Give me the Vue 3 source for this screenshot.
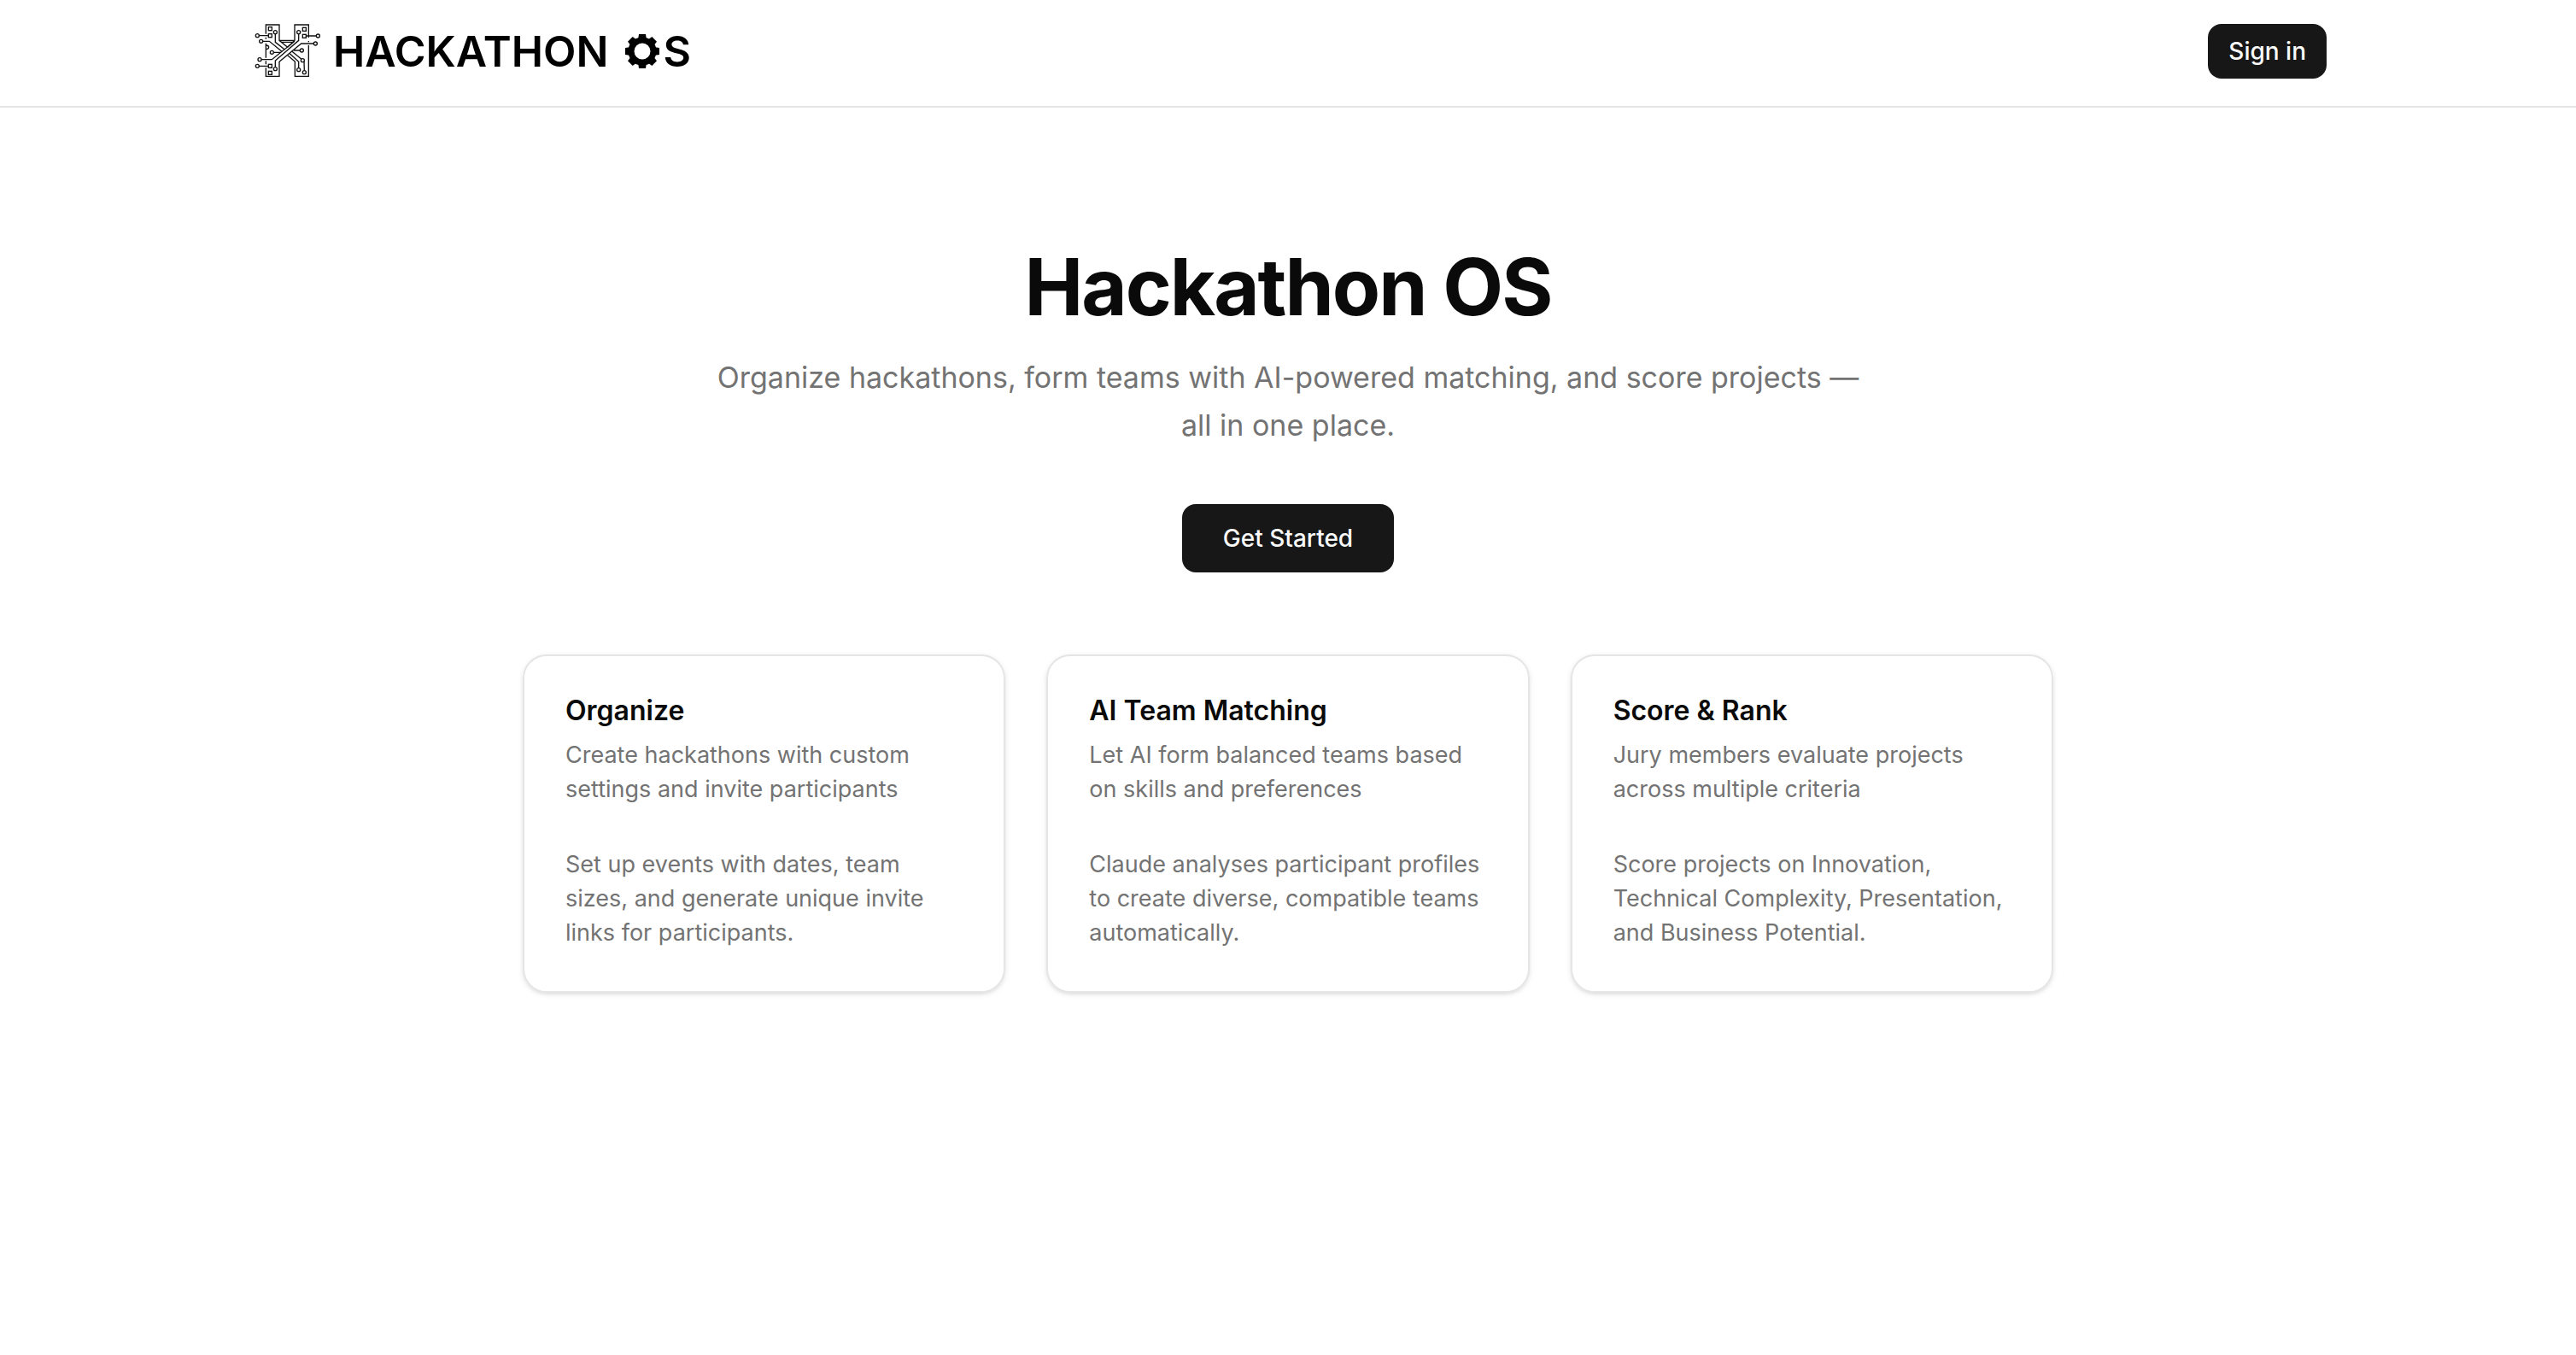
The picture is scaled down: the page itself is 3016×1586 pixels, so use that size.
<script setup>
    const features = [
        {
            title: 'Organize',
            description: 'Create hackathons with custom settings and invite participants',
            content: 'Set up events with dates, team sizes, and generate unique invite links for participants.'
        },
        {
            title: 'AI Team Matching',
            description: 'Let AI form balanced teams based on skills and preferences',
            content: 'Claude analyses participant profiles to create diverse, compatible teams automatically.'
        },
        {
            title: 'Score & Rank',
            description: 'Jury members evaluate projects across multiple criteria',
            content: 'Score projects on Innovation, Technical Complexity, Presentation, and Business Potential.'
        }
    ];

    // end points of the circuit traces in the logo
    const nodes = [
        [34, 65], [47, 85], [97, 53], [179, 53], [247, 66], [238, 93],
        [85, 124], [190, 117], [42, 149], [34, 172], [97, 182], [193, 152], [179, 185], [199, 194]
    ];
    const pads = [[73, 35], [73, 59], [193, 37], [193, 61], [73, 166], [73, 190]];
    const teeth = [0, 45, 90, 135, 180, 225, 270, 315];
</script>
<template>
    <div class="page">
        <header class="header">
            <div class="header-inner">
                <a class="logo" href="#" aria-label="Hackathon OS">
                    <svg class="logo-mark" viewBox="24 24 234 192" aria-hidden="true">
                        <g class="trace">
                            <path d="M64 59V27H111V82L140 106M140 106L165 82V27H214V72M214 84V88M214 99V208H166V156L140 134" />
                            <path d="M64 71V77M64 92V143M64 154V166M64 178V208H111V156" />
                            <path d="M111 82H165M118 88H158" />
                            <path d="M40 65H73M205 66H241M40 172H73" />
                            <path d="M53 85H76L120 121M97 59V88L130 114" />
                            <path d="M148 128L179 157V179M156 121L189 148M198 156L199 188" />
                            <path d="M91 124H116M184 117H162" />
                            <path d="M48 149H85L165 85" />
                            <path d="M179 59V82L97 153V176" />
                            <path d="M232 93H188L111 157" />
                            <path d="M64 99Q74 99 74 106Q74 113 64 113" />
                        </g>
                        <circle v-for="(n, i) in nodes" :key="i" class="node" :cx="n[0]" :cy="n[1]" r="6" />
                        <rect v-for="(p, i) in pads" :key="i" class="node" :x="p[0]" :y="p[1]" width="12" height="12" />
                    </svg>
                    <span class="logo-text">HACKATHON</span>
                    <svg class="logo-gear" viewBox="-20 -20 40 40" aria-hidden="true">
                        <path v-for="t in teeth" :key="t" d="M-5 -13L-4 -20H4L5 -13Z" :transform="`rotate(${t})`" />
                        <circle class="gear-ring" r="13" />
                    </svg>
                    <span class="logo-text">S</span>
                </a>
                <button class="btn btn-small" type="button">Sign in</button>
            </div>
        </header>
        <main class="main">
            <section class="hero">
                <h1>Hackathon OS</h1>
                <p>Organize hackathons, form teams with AI-powered matching, and score projects — all in one place.</p>
                <button class="btn btn-large" type="button">Get Started</button>
            </section>
            <section class="features">
                <article class="card" v-for="feature in features" :key="feature.title">
                    <div class="card-header">
                        <h2>{{ feature.title }}</h2>
                        <p>{{ feature.description }}</p>
                    </div>
                    <p>{{ feature.content }}</p>
                </article>
            </section>
        </main>
    </div>
</template>
<style>
    body {
        background-color: #fff;
        margin: 0;
    }
</style>
<style scoped>
    .page {
        color: #0a0a0a;
        font-family: Inter, "Liberation Sans", sans-serif;
        min-height: 100vh;
    }
    h1, h2, p {
        margin: 0;
    }
    .header {
        border-bottom: 2px solid #e5e5e5;
    }
    .header-inner {
        align-items: center;
        box-sizing: border-box;
        display: flex;
        justify-content: space-between;
        margin: 0 auto;
        max-width: 2560px;
        padding: 28px 64px 32px 70px;
    }
    .logo {
        align-items: center;
        color: #000;
        display: flex;
        text-decoration: none;
    }
    .logo-mark {
        height: 64px;
        margin-right: 14px;
        width: 78px;
    }
    .trace, .node {
        fill: none;
        stroke: #111;
        stroke-width: 4;
    }
    .node {
        fill: #fff;
    }
    .logo-text {
        font-size: 50px;
        font-weight: 600;
        line-height: 64px;
    }
    .logo-gear {
        height: 40px;
        margin: 0 4px 0 20px;
        width: 40px;
    }
    .gear-ring {
        fill: none;
        stroke: #000;
        stroke-width: 7;
    }
    .btn {
        background-color: #171717;
        border: none;
        border-radius: 16px;
        color: #fafafa;
        cursor: pointer;
        font-family: inherit;
        font-size: 28px;
        font-weight: 500;
        line-height: 40px;
    }
    .btn-small {
        padding: 12px 24px;
    }
    .btn-large {
        padding: 20px 48px;
    }
    .main {
        align-items: center;
        display: flex;
        flex-direction: column;
        gap: 96px;
        padding: 162px 64px 96px;
    }
    .hero {
        align-items: center;
        display: flex;
        flex-direction: column;
        max-width: 1344px;
        text-align: center;
    }
    .hero h1 {
        font-size: 92px;
        font-weight: 700;
        letter-spacing: -2px;
        line-height: 96px;
    }
    .hero p {
        color: #737373;
        font-size: 34px;
        line-height: 56px;
        margin: 30px 0 64px;
    }
    .features {
        display: grid;
        gap: 48px;
        grid-template-columns: repeat(3, 1fr);
        max-width: 1792px;
        width: 100%;
    }
    .card {
        border: 2px solid #e5e5e5;
        border-radius: 28px;
        box-shadow: 0 2px 6px rgba(0, 0, 0, 0.1), 0 2px 4px -2px rgba(0, 0, 0, 0.1);
        display: flex;
        flex-direction: column;
        gap: 48px;
        padding: 48px;
    }
    .card-header {
        display: flex;
        flex-direction: column;
        gap: 16px;
    }
    .card h2 {
        font-size: 32px;
        font-weight: 600;
        line-height: 32px;
    }
    .card p {
        color: #737373;
        font-size: 27px;
        line-height: 40px;
    }
</style>
